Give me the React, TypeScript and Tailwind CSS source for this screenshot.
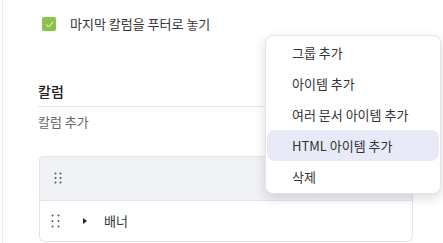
import React from 'react';

const font = { fontFamily: '"Noto Sans CJK KR", "Noto Sans", sans-serif' };

const menuItems = ['그룹 추가', '아이템 추가', '여러 문서 아이템 추가', 'HTML 아이템 추가', '삭제'];

const DragDots = ({ gap = 4.5, dx = 5 }: { gap?: number; dx?: number }) => (
  <svg width={dx + 3} height={gap * 2 + 3} className="block">
    {[0, 1, 2].map((r) =>
      [0, 1].map((c) => (
        <circle key={`${r}-${c}`} cx={1.5 + c * dx} cy={1.5 + r * gap} r={1} fill="#4b5563" />
      ))
    )}
  </svg>
);

export default function App() {
  return (
    <div className="relative h-[243px] w-[443px] overflow-hidden bg-white pl-[2px]" style={font}>
      <div className="h-full border-l border-[#e6e8ec] pl-[35px]">
        {/* footer option */}
        <div className="flex h-[48px] items-center pl-[4px]">
          <span className="flex h-[14px] w-[14px] items-center justify-center rounded-[2px] bg-[#8bc34a]">
            <svg width="9" height="7" viewBox="0 0 9 7">
              <path d="M1 3.5 L3.5 6 L8 1" stroke="#fff" strokeWidth="1" fill="none" />
            </svg>
          </span>
          <span className="ml-[14px] text-[13px] text-[#333]">마지막 칼럼을 푸터로 놓기</span>
        </div>

        {/* columns */}
        <div className="mt-[33px] w-[400px] border-b border-[#e3e6ea] pb-[4px] text-[14px] font-medium text-[#222]">
          칼럼
        </div>
        <div className="mt-[5px] text-[13px] text-[#666]">칼럼 추가</div>

        <div className="mt-[24px] ml-[1px] w-[374px]">
          <div className="flex h-[45px] items-center rounded-t-[4px] border border-[#e2e5ea] bg-[#f0f2f5] pl-[14px]">
            <DragDots gap={4.5} dx={5} />
          </div>
          <div className="flex h-[41px] items-center rounded-b-[6px] border border-t-0 border-[#e2e5ea] bg-white pl-[11px]">
            <DragDots gap={5.5} dx={6} />
            <svg width="4" height="6" viewBox="0 0 4 6" className="ml-[23px]">
              <path d="M0 0 L4 3 L0 6 Z" fill="#222" />
            </svg>
            <span className="ml-[17px] text-[13px] text-[#333]">배너</span>
          </div>
        </div>
      </div>

      {/* context menu */}
      <div className="absolute left-[265px] top-[35px] w-[176px] rounded-[8px] border border-[#e3e5ee] bg-white py-[1px] shadow-[0_4px_12px_rgba(0,0,0,0.15)]">
        {menuItems.map((item) => (
          <div
            key={item}
            className={`mx-[1px] flex h-[31px] items-center rounded-[8px] pl-[25px] text-[13px] text-[#333] ${
              item === 'HTML 아이템 추가' ? 'bg-[#e8eaf8]' : ''
            }`}
          >
            {item}
          </div>
        ))}
      </div>
    </div>
  );
}
